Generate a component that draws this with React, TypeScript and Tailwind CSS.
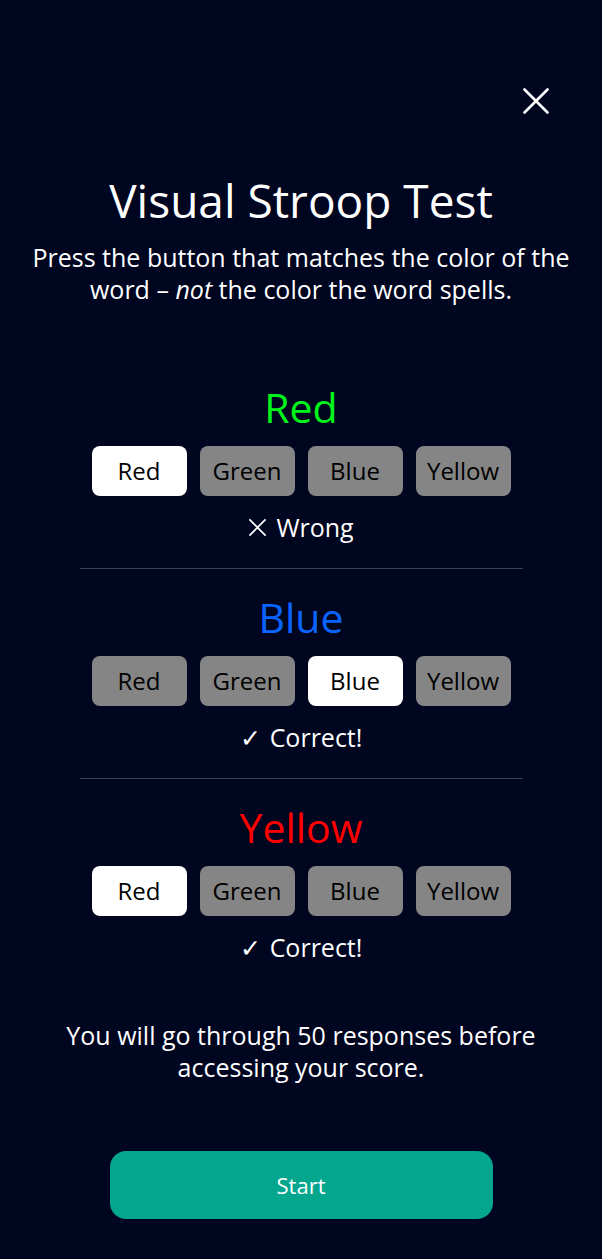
const choices = ["Red", "Green", "Blue", "Yellow"];

type Trial = {
  word: string;
  color: string;
  picked: string;
  correct: boolean;
};

const trials: Trial[] = [
  { word: "Red", color: "text-[#00f51a]", picked: "Red", correct: false },
  { word: "Blue", color: "text-[#0a64ff]", picked: "Blue", correct: true },
  { word: "Yellow", color: "text-[#ff0000]", picked: "Red", correct: true },
];

const TrialRow = ({ trial }: { trial: Trial }) => {
  return (
    <div className="flex flex-col items-center">
      <div className={`text-[41px] leading-[48px] ${trial.color}`}>{trial.word}</div>
      <div className="mt-[15px] flex gap-[13px]">
        {choices.map((c) => (
          <div
            key={c}
            className={`flex h-[50px] w-[95px] items-center justify-center rounded-[8px] text-[24px] text-black ${
              c === trial.picked ? "bg-white" : "bg-[#858585]"
            }`}
          >
            {c}
          </div>
        ))}
      </div>
      <div className="mt-[15px] flex items-center gap-[9px] text-[25px] leading-[32px] text-white">
        {trial.correct ? (
          <span>{"\u2713"}</span>
        ) : (
          <svg viewBox="0 0 20 20" className="h-[19px] w-[19px]" fill="none" stroke="white" strokeWidth="1.8">
            <path d="M1.5 1.5 L18.5 18.5 M18.5 1.5 L1.5 18.5" />
          </svg>
        )}
        <span>{trial.correct ? "Correct!" : "Wrong"}</span>
      </div>
    </div>
  );
};

export default function App() {
  return (
    <div
      className="min-h-screen bg-[#000520] text-white"
      style={{ fontFamily: "'Open Sans', 'Noto Sans', sans-serif" }}
    >
      <div className="flex justify-end pr-[53px] pt-[88px]">
        <button className="h-[26px] w-[26px]" aria-label="Close">
          <svg viewBox="0 0 26 26" className="h-[26px] w-[26px]" fill="none" stroke="white" strokeWidth="2.6" strokeLinecap="round">
            <path d="M1.5 1.5 L24.5 24.5 M24.5 1.5 L1.5 24.5" />
          </svg>
        </button>
      </div>

      <h1 className="mt-[58px] text-center text-[46px] leading-[56px]">Visual Stroop Test</h1>
      <p className="mx-auto mt-[13px] max-w-[570px] text-center text-[25px] leading-[32px]">
        Press the button that matches the color of the word {"\u2013"} <em>not</em> the color the word spells.
      </p>

      <div className="mx-auto mt-[78px] flex w-[443px] flex-col">
        {trials.map((t, i) => (
          <div key={t.word}>
            {i > 0 && <div className="mb-[24px] mt-[25px] h-px bg-[#3d4153]" />}
            <TrialRow trial={t} />
          </div>
        ))}
      </div>

      <p className="mx-auto mt-[56px] max-w-[500px] text-center text-[25px] leading-[32px]">
        You will go through 50 responses before accessing your score.
      </p>

      <div className="mt-[68px] flex justify-center">
        <button className="h-[68px] w-[383px] rounded-[16px] bg-[#05a68e] text-[22px] text-white">
          Start
        </button>
      </div>
    </div>
  );
}
